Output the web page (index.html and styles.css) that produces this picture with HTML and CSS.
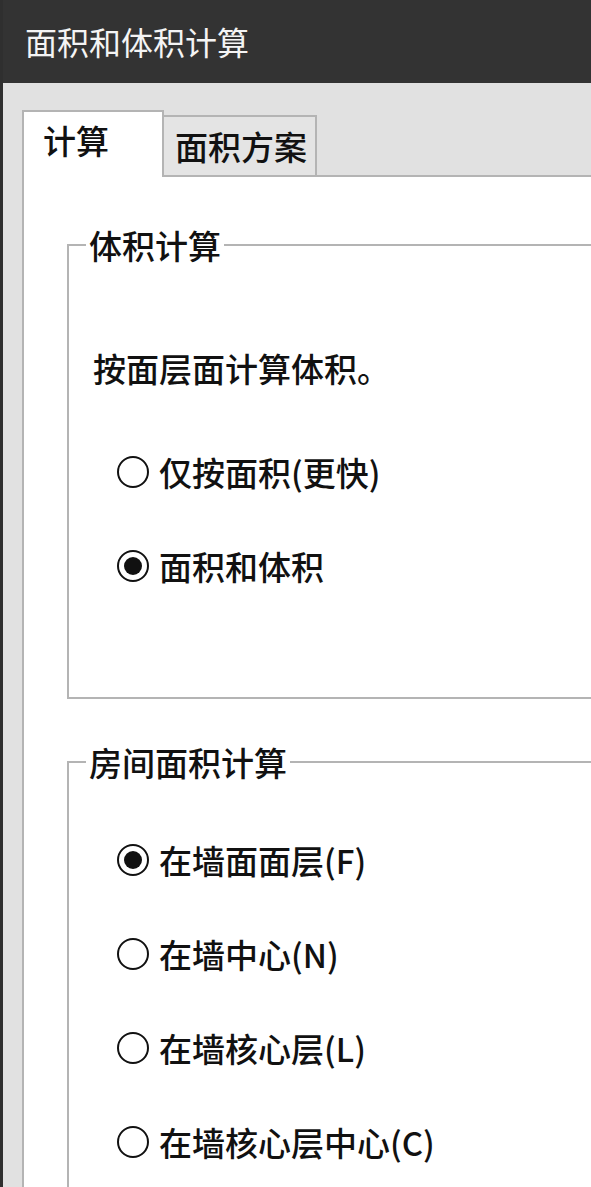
FILE: index.html
```html
<!DOCTYPE html>
<html lang="zh-CN">
<head>
  <meta charset="UTF-8" />
  <title>面积和体积计算</title>
  <link rel="stylesheet" href="styles.css">
</head>
<body>
  <div class="window">
    <div class="titlebar">面积和体积计算</div>

    <div class="client">
      <!-- Tabs -->
      <div class="tabs">
        <div class="tab active">计算</div>
        <div class="tab">面积方案</div>
      </div>

      <div class="panel">
        <!-- Volume -->
        <fieldset class="group group-volume">
          <legend>体积计算</legend>
          <div class="group-body">
            <p class="note">按面层面计算体积。</p>
            <label class="radio first">
              <span class="dot"></span>
              <span>仅按面积(更快)</span>
            </label>
            <label class="radio">
              <span class="dot checked"></span>
              <span>面积和体积</span>
            </label>
          </div>
        </fieldset>

        <!-- Room area -->
        <fieldset class="group group-room">
          <legend>房间面积计算</legend>
          <div class="group-body">
            <label class="radio first">
              <span class="dot checked"></span>
              <span>在墙面面层(F)</span>
            </label>
            <label class="radio">
              <span class="dot"></span>
              <span>在墙中心(N)</span>
            </label>
            <label class="radio">
              <span class="dot"></span>
              <span>在墙核心层(L)</span>
            </label>
            <label class="radio">
              <span class="dot"></span>
              <span>在墙核心层中心(C)</span>
            </label>
          </div>
        </fieldset>
      </div>
    </div>
  </div>
</body>
</html>
```

FILE: styles.css
```css
html, body {
  margin: 0;
  overflow: hidden;
}
body {
  font-family: "Noto Sans CJK SC", "Noto Sans", sans-serif;
  font-size: 33px;
  line-height: 36px;
  font-weight: 500;
  color: #111;
  background: #e1e1e1;
}
.window {
  box-sizing: border-box;
  height: 100vh;
  overflow: hidden;
  border-left: 3px solid #2f2f2f;
  background: #e1e1e1;
}
.titlebar {
  height: 83px;
  line-height: 83px;
  padding-left: 22px;
  background: #333;
  color: #f4f4f4;
  font-size: 32px;
  font-weight: 400;
}
.client {
  padding: 27px 0 0 19px;
}
.tabs {
  display: flex;
  align-items: flex-end;
}
.tab {
  border: 2px solid #b4b4b4;
  border-bottom: none;
  border-left: none;
  background: #e4e4e4;
  padding: 11px 8px 11px 11px;
}
.tab.active {
  position: relative;
  z-index: 1;
  box-sizing: border-box;
  width: 142px;
  border-left: 2px solid #b4b4b4;
  background: #fff;
  padding: 10px 0 19px 19px;
  margin-bottom: -2px;
}
.panel {
  width: 700px;
  background: #fff;
  border-top: 2px solid #b4b4b4;
  border-left: 2px solid #b4b4b4;
  min-height: 1100px;
  padding-top: 50px;
}
.group {
  margin: 0 0 0 43px;
  padding: 0;
  border: 2px solid #b4b4b4;
  border-right: none;
}
.group legend {
  margin-left: 17px;
  padding: 0 3px;
}
.group-volume .group-body {
  padding-bottom: 113px;
}
.group-room {
  margin-top: 45px;
  padding-bottom: 200px;
}
.note {
  margin: 87px 0 0 24px;
}
.radio {
  display: flex;
  align-items: center;
  gap: 10px;
  margin: 58px 0 0 48px;
  height: 36px;
}
.group-volume .radio.first {
  margin-top: 68px;
}
.group-room .radio.first {
  margin-top: 62px;
}
.dot {
  box-sizing: border-box;
  width: 32px;
  height: 32px;
  border: 2px solid #111;
  border-radius: 50%;
  display: flex;
  align-items: center;
  justify-content: center;
}
.dot.checked::after {
  content: "";
  width: 18px;
  height: 18px;
  border-radius: 50%;
  background: #111;
}
```
